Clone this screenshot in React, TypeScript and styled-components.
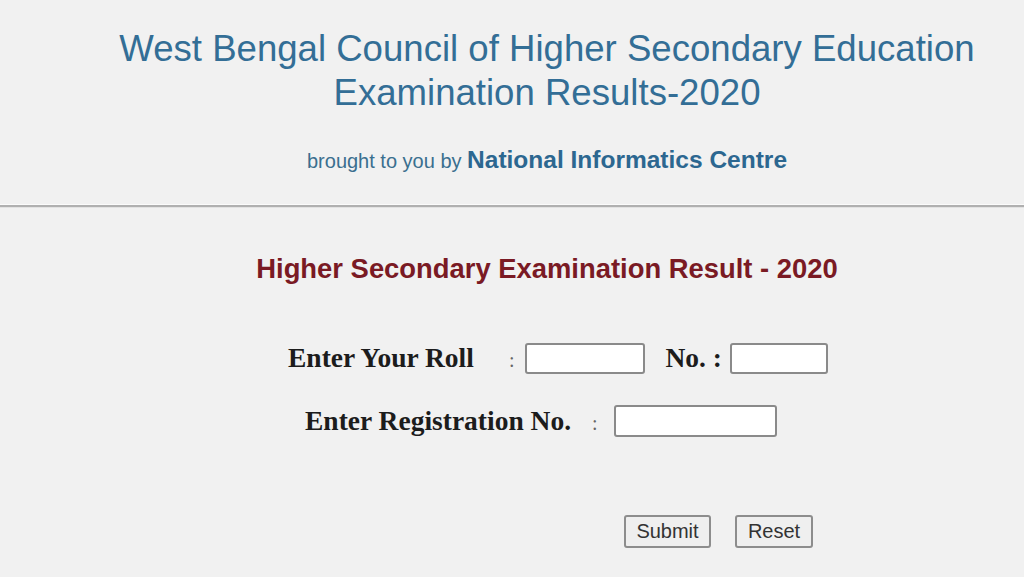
import React from 'react';
import styled, { createGlobalStyle } from 'styled-components';

const GlobalStyle = createGlobalStyle`
  html, body {
    margin: 0;
    padding: 0;
    background: #f1f1f1;
  }
  body {
    font-family: "Liberation Sans", Arial, sans-serif;
  }
`;

const Page = styled.div`
  width: 1024px;
  height: 577px;
  overflow: hidden;
  background: #f1f1f1;
`;

const Header = styled.header`
  display: flex;
  flex-direction: column;
  align-items: center;
  padding: 27px 0 0 70px;
  height: 205px;
  box-sizing: border-box;
`;

const Title = styled.h1`
  margin: 0;
  font-size: 36.6px;
  font-weight: normal;
  line-height: 44px;
  color: #336e96;
  text-align: center;
`;

const Credit = styled.p`
  margin: 30px 0 0;
  line-height: 30px;
  font-size: 20px;
  color: #3a6f8f;
  text-align: center;
`;

const Org = styled.span`
  font-size: 24.5px;
  font-weight: bold;
  color: #2c6790;
`;

const Rule = styled.hr`
  margin: 0;
  height: 0;
  border: 0;
  border-top: 2px solid #b0b0b0;
  border-bottom: 1px solid #e2e2e2;
  box-shadow: 0 -1px 0 #fbfbfb;
`;

const Main = styled.main`
  display: flex;
  flex-direction: column;
  align-items: center;
  padding: 45px 0 0 70px;
`;

const Heading = styled.h2`
  margin: 0;
  line-height: 32px;
  font-size: 27.4px;
  font-weight: bold;
  color: #7a1a24;
`;

const Form = styled.form`
  align-self: flex-start;
  display: flex;
  flex-direction: column;
  gap: 29px;
  margin: 56px 0 0 218px;
`;

const Row = styled.div<{ $indent?: number }>`
  display: flex;
  align-items: center;
  height: 34px;
  margin-left: ${(p) => p.$indent ?? 0}px;
`;

const Label = styled.label<{ $ml?: number; $mr?: number }>`
  font-family: "Liberation Serif", "Times New Roman", serif;
  font-size: 27.5px;
  font-weight: bold;
  color: #1c1c1c;
  white-space: nowrap;
  margin: 0 ${(p) => p.$mr ?? 0}px 0 ${(p) => p.$ml ?? 0}px;
`;

const Colon = styled.span<{ $ml: number; $mr: number }>`
  font-family: "Liberation Serif", "Times New Roman", serif;
  font-size: 20px;
  color: #666;
  margin: 4px ${(p) => p.$mr}px 0 ${(p) => p.$ml}px;
`;

const Field = styled.input<{ $w: number; $h?: number }>`
  width: ${(p) => p.$w}px;
  height: ${(p) => p.$h ?? 31}px;
  box-sizing: border-box;
  border: 2px solid #8a8a8a;
  border-radius: 3px;
  background: #fff;
  padding: 0 4px;
`;

const Buttons = styled.div`
  align-self: flex-start;
  display: flex;
  gap: 24px;
  margin: 77px 0 0 554px;
`;

const Button = styled.button<{ $w: number }>`
  width: ${(p) => p.$w}px;
  height: 33px;
  padding: 0;
  font-family: "Liberation Sans", Arial, sans-serif;
  font-size: 20px;
  color: #333;
  background: #efefef;
  border: 2px solid #8d8d8d;
  border-radius: 3px;
`;

export default function App() {
  return (
    <Page>
      <GlobalStyle />
      <Header>
        <Title>
          West Bengal Council of Higher Secondary Education
          <br />
          Examination Results-2020
        </Title>
        <Credit>
          brought to you by <Org>National Informatics Centre</Org>
        </Credit>
      </Header>
      <Rule />
      <Main>
        <Heading>Higher Secondary Examination Result - 2020</Heading>
        <Form onSubmit={(e) => e.preventDefault()}>
          <Row>
            <Label>Enter Your Roll</Label>
            <Colon $ml={35} $mr={11}>:</Colon>
            <Field $w={120} />
            <Label $ml={20} $mr={8}>No. :</Label>
            <Field $w={98} />
          </Row>
          <Row $indent={17}>
            <Label>Enter Registration No.</Label>
            <Colon $ml={21} $mr={16}>:</Colon>
            <Field $w={163} $h={32} />
          </Row>
        </Form>
        <Buttons>
          <Button type="submit" $w={87}>Submit</Button>
          <Button type="reset" $w={78}>Reset</Button>
        </Buttons>
      </Main>
    </Page>
  );
}
